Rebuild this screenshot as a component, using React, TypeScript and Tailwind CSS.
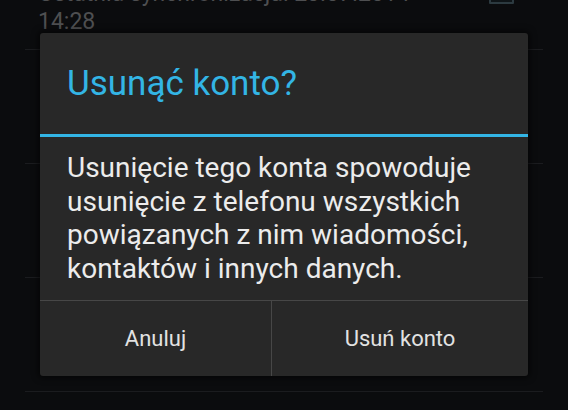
import React from "react";

const font = { fontFamily: "Roboto, 'Noto Sans', sans-serif" };

function BgItem({ children, first }: { children?: React.ReactNode; first?: boolean }) {
  return (
    <div className={first ? "flex flex-col" : "flex flex-col h-[114px]"}>
      <div className="flex-1">{children}</div>
      <div className="mx-[25px] h-px bg-[#1b1c1f]" />
    </div>
  );
}

export default function App() {
  return (
    <div
      className="relative w-[568px] h-[410px] overflow-hidden bg-[#0b0c0e]"
      style={font}
    >
      <div className="flex flex-col -mt-[20px]">
        <BgItem first>
          <div className="flex pl-[38px] pr-[54px] pb-[13px]">
            <div className="flex-1 text-[23px] leading-[28px] text-[#4e4f51]">
              <div>Ostatnia synchronizacja: 23.07.2014</div>
              <div>14:28</div>
            </div>
            <div className="-mt-[1px] w-[25px] h-[25px] border-2 border-[#2c3a40] bg-[#0e1417] rounded-[1px]" />
          </div>
        </BgItem>
        <BgItem />
        <BgItem />
        <BgItem />
      </div>

      <div className="absolute left-[40px] top-[33px] w-[488px] h-[343px] flex flex-col bg-[#282828] rounded-[3px] shadow-[0_0_6px_2px_rgba(0,0,0,0.6)] overflow-hidden">
        <div className="h-[101px] flex items-center pl-[27px] text-[35px] leading-none text-[#33b5e5]">
          Usunąć konto?
        </div>
        <div className="h-[3px] bg-[#33b5e5]" />
        <div className="flex-1 pl-[27px] pr-[12px] pt-[14px] text-[28px] leading-[33.5px] text-[#ececec]">
          Usunięcie tego konta spowoduje usunięcie z telefonu wszystkich
          powiązanych z nim wiadomości, kontaktów i innych danych.
        </div>
        <div className="h-px bg-[#474747]" />
        <div className="h-[75px] flex text-[22px] text-[#e2e2e2]">
          <div className="w-[231px] flex items-center justify-center">Anuluj</div>
          <div className="w-px bg-[#474747]" />
          <div className="flex-1 flex items-center justify-center">Usuń konto</div>
        </div>
      </div>
    </div>
  );
}
